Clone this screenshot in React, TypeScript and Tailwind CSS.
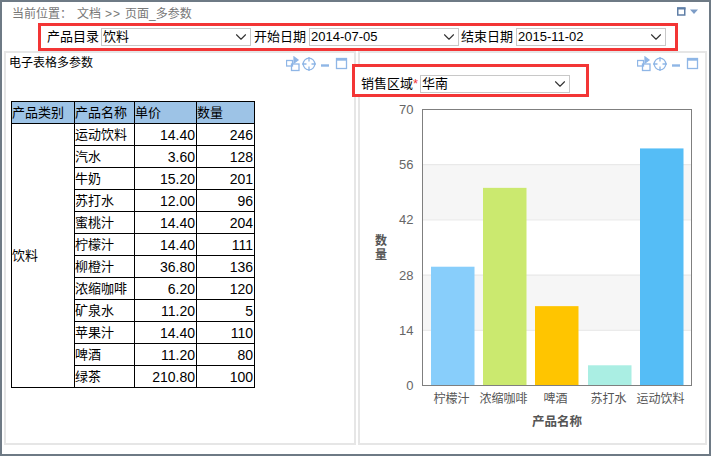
import { ChevronDown } from 'lucide-react';

const font = { fontFamily: '"Liberation Sans", "Noto Sans CJK SC", sans-serif' };

const rows = [
  ['运动饮料', '14.40', '246'],
  ['汽水', '3.60', '128'],
  ['牛奶', '15.20', '201'],
  ['苏打水', '12.00', '96'],
  ['蜜桃汁', '14.40', '204'],
  ['柠檬汁', '14.40', '111'],
  ['柳橙汁', '36.80', '136'],
  ['浓缩咖啡', '6.20', '120'],
  ['矿泉水', '11.20', '5'],
  ['苹果汁', '14.40', '110'],
  ['啤酒', '11.20', '80'],
  ['绿茶', '210.80', '100'],
];

const bars = [
  { name: '柠檬汁', value: 30, x: 431, color: '#88cefb' },
  { name: '浓缩咖啡', value: 50, x: 483, color: '#cbe96f' },
  { name: '啤酒', value: 20, x: 535, color: '#ffc500' },
  { name: '苏打水', value: 5, x: 588, color: '#aaeee3' },
  { name: '运动饮料', value: 60, x: 640, color: '#55bdf6' },
];

function Select({ value }: { value: string }) {
  return (
    <div className="w-[150px] h-[18px] shrink-0 border border-[#c8c8c8] bg-white flex items-center justify-between pl-px text-[13px] text-black">
      <span>{value}</span>
      <ChevronDown size={18} strokeWidth={1.5} className="text-[#333] shrink-0" />
    </div>
  );
}

function PanelIcons() {
  return (
    <svg width="62" height="16" viewBox="0 0 62 16" className="block" fill="none" stroke="#8fb6e6" strokeWidth="1.3">
      <rect x="0.5" y="4.5" width="6" height="5.5" />
      <rect x="5.5" y="8" width="7.5" height="6.5" />
      <path d="M8 1v6l4-3z" fill="#8fb6e6" />
      <circle cx="23" cy="8" r="5.8" />
      <path d="M23 1v4.5M23 10.5v4.5M16 8h4.5M25.5 8h4.5" />
      <path d="M35 9.5h8" strokeWidth="2.4" />
      <rect x="50.5" y="2.5" width="10" height="10" />
      <path d="M50 3.5h11" strokeWidth="2.4" />
    </svg>
  );
}

function Chart() {
  const y = (v: number) => 385 - v * (276 / 70);
  return (
    <svg width="349" height="350" viewBox="358 97 349 350" className="block" style={font}>
      <rect x="422" y={y(56)} width="270" height={y(42) - y(56)} fill="#f6f6f6" />
      <rect x="422" y={y(28)} width="270" height={y(14) - y(28)} fill="#f6f6f6" />
      {[14, 28, 42, 56].map((t) => (
        <line key={t} x1="422" x2="692" y1={y(t) + 0.5} y2={y(t) + 0.5} stroke="#e6e6e6" />
      ))}
      {bars.map((b) => (
        <rect key={b.name} x={b.x} y={y(b.value)} width="43.5" height={y(0) - y(b.value)} fill={b.color} />
      ))}
      <rect x="422.5" y="109.5" width="269" height="276" fill="none" stroke="#7f7f7f" />
      {[0, 14, 28, 42, 56, 70].map((t) => (
        <text key={t} x="413.5" y={y(t) + 5} textAnchor="end" fontSize="13" fill="#666">{t}</text>
      ))}
      <text x="381" y="245" textAnchor="middle" fontSize="12" fontWeight="700" fill="#555">数</text>
      <text x="381" y="259" textAnchor="middle" fontSize="12" fontWeight="700" fill="#555">量</text>
      {bars.map((b) => (
        <text key={b.name} x={b.x + 20.5} y="403" textAnchor="middle" fontSize="12" fill="#555">{b.name}</text>
      ))}
      <text x="557" y="426" textAnchor="middle" fontSize="12.5" fontWeight="700" fill="#555">产品名称</text>
    </svg>
  );
}

export default function App() {
  return (
    <div className="w-[711px] h-[456px] bg-white border-2 border-[#6e7a85] flex flex-col overflow-hidden" style={font}>
      <div className="h-[21px] shrink-0 flex items-center justify-between pl-[10px] pr-[4px] pt-[3px] text-[12px] text-[#777]">
        <div className="flex gap-[4px]">
          <span className="mr-px">当前位置：</span>
          <span>文档</span>
          <span className="tracking-[1px]">&gt;&gt;</span>
          <span>页面_多参数</span>
        </div>
        <svg width="28" height="10" viewBox="0 0 28 10" className="block -mt-[5px]">
          <rect x="0.75" y="1" width="7" height="7" fill="none" stroke="#5f7ea6" strokeWidth="1.5" />
          <path d="M0 1.5h8.5" stroke="#5f7ea6" strokeWidth="2" />
          <path d="M13 2.5h8l-4 4.5z" fill="#7c9cc6" />
        </svg>
      </div>

      <div className="ml-[36px] w-[640px] h-[28px] shrink-0 border-[3px] border-[#f33535] flex items-center pl-[6px] gap-[2px] text-[13px] text-black">
        <span className="w-[52px] shrink-0">产品目录</span>
        <Select value="饮料" />
        <span className="w-[53px] shrink-0 ml-[1px]">开始日期</span>
        <Select value="2014-07-05" />
        <span className="w-[53px] shrink-0">结束日期</span>
        <Select value="2015-11-02" />
      </div>

      <div className="flex-1 min-h-0 flex gap-[2px] pl-[2px] pr-[2px] pb-[9px]">
        <div className="w-[352px] shrink-0 border-2 border-[#e6e6e6]">
          <div className="flex justify-between items-start pl-[3px] pr-[6px] text-[12px] text-black h-[48px]">
            <span className="mt-[1px]">电子表格多参数</span>
            <div className="mt-[3px]"><PanelIcons /></div>
          </div>
          <table className="ml-[5px] border-collapse table-fixed w-[244px] text-[13px] text-black">
            <colgroup>
              <col className="w-[63px]" />
              <col className="w-[60px]" />
              <col className="w-[62px]" />
              <col className="w-[58px]" />
            </colgroup>
            <thead>
              <tr className="h-[22px] bg-[#9dc3e6]">
                {['产品类别', '产品名称', '单价', '数量'].map((h) => (
                  <th key={h} className="border border-black p-0 font-normal text-left leading-none whitespace-nowrap">{h}</th>
                ))}
              </tr>
            </thead>
            <tbody>
              {rows.map((r, i) => (
                <tr key={r[0]} className="h-[22px]">
                  {i === 0 && (
                    <td rowSpan={12} className="border border-black p-0 leading-none">饮料</td>
                  )}
                  <td className="border border-black p-0 leading-none whitespace-nowrap">{r[0]}</td>
                  <td className="border border-black p-0 pr-px leading-none text-right text-[14px]">{r[1]}</td>
                  <td className="border border-black p-0 pr-px leading-none text-right text-[14px]">{r[2]}</td>
                </tr>
              ))}
            </tbody>
          </table>
        </div>

        <div className="flex-1 min-w-0 border-2 border-[#e6e6e6] flex flex-col">
          <div className="h-[11px] shrink-0 flex justify-end pr-[6px]">
            <div className="mt-[3px] h-[16px]"><PanelIcons /></div>
          </div>
          <div className="-ml-[8px] w-[237px] h-[33px] border-[3px] border-[#f33535] flex items-center pl-[6px] pt-[6px] bg-white relative text-[13px] text-black shrink-0">
            <span className="whitespace-nowrap">销售区域<span className="text-[#e33]">*</span></span>
            <div className="ml-[2px]"><Select value="华南" /></div>
          </div>
          <div className="-ml-[2px]"><Chart /></div>
        </div>
      </div>
    </div>
  );
}
